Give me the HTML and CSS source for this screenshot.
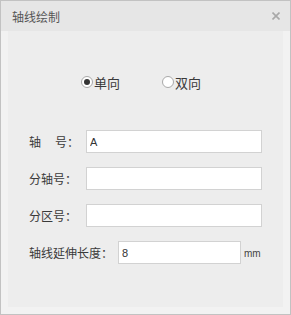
FILE: index.html
```html
<!DOCTYPE html>
<html lang="zh-CN">
<head>
  <meta charset="UTF-8" />
  <title>轴线绘制</title>
  <link rel="stylesheet" href="styles.css">
</head>
<body>
  <div class="dialog">
    <div class="dialog-header">
      <span class="dialog-title">轴线绘制</span>
      <span class="dialog-close">
        <svg width="8" height="8" viewBox="0 0 8 8"><path d="M0.5 0.5L7.5 7.5M7.5 0.5L0.5 7.5" stroke="#a8a8a8" stroke-width="1.6"/></svg>
      </span>
    </div>
    <div class="dialog-body">
      <div class="panel">
        <div class="radio-row">
          <label class="radio-item"><span class="radio checked"></span>单向</label>
          <label class="radio-item"><span class="radio"></span>双向</label>
        </div>

        <div class="form-row">
          <span class="field-label"><span class="spaced">轴</span>号：</span>
          <input type="text" class="field-input" value="A" />
        </div>
        <div class="form-row">
          <span class="field-label">分轴号：</span>
          <input type="text" class="field-input" value="" />
        </div>
        <div class="form-row">
          <span class="field-label">分区号：</span>
          <input type="text" class="field-input" value="" />
        </div>
        <div class="form-row">
          <span class="field-label wide">轴线延伸长度：</span>
          <input type="text" class="field-input short" value="8" />
          <span class="unit">mm</span>
        </div>
      </div>
    </div>
  </div>
</body>
</html>
```

FILE: styles.css
```css
body {
  margin: 0;
  padding: 0;
  font-family: "Noto Sans CJK SC", "Liberation Sans", sans-serif;
  background: #f2f2f2;
}
.dialog {
  width: 291px;
  height: 315px;
  box-sizing: border-box;
  border: 1px solid #c2c2c2;
  background: #f2f2f2;
  display: flex;
  flex-direction: column;
}
.dialog-header {
  height: 30px;
  background: #e6e6e6;
  display: flex;
  align-items: center;
  justify-content: space-between;
  padding: 0 10px 0 11px;
}
.dialog-title {
  font-size: 12px;
  color: #555;
}
.dialog-close {
  display: flex;
  margin-top: -1px;
}
.dialog-body {
  flex: 1;
  padding: 0 7px 7px 7px;
  display: flex;
}
.panel {
  flex: 1;
  background: #ededed;
  padding-left: 21px;
}
.radio-row {
  display: flex;
  margin: 41px 0 0 52px;
  height: 20px;
  align-items: center;
}
.radio-item {
  width: 81px;
  display: flex;
  align-items: center;
  font-size: 13px;
  color: #3a3a3a;
}
.radio {
  width: 10px;
  height: 10px;
  border: 1px solid #a9a9a9;
  border-radius: 50%;
  background: #fff;
  margin-right: 1px;
  position: relative;
}
.radio.checked::after {
  content: "";
  position: absolute;
  left: 2px;
  top: 2px;
  width: 6px;
  height: 6px;
  border-radius: 50%;
  background: #333;
}
.form-row {
  display: flex;
  align-items: center;
  height: 23px;
  margin-top: 14px;
}
.radio-row + .form-row {
  margin-top: 38px;
}
.field-label {
  width: 57px;
  font-size: 12px;
  color: #3a3a3a;
}
.field-label.wide {
  width: 89px;
}
.spaced {
  margin-right: 14px;
}
.field-input {
  width: 176px;
  height: 23px;
  box-sizing: border-box;
  border: 1px solid #d2d2d2;
  background: #fff;
  padding: 0 3px;
  font-family: "Liberation Sans", sans-serif;
  font-size: 11px;
  color: #333;
  outline: none;
}
.field-input.short {
  width: 123px;
}
.unit {
  font-family: "Liberation Sans", sans-serif;
  font-size: 10px;
  color: #444;
  margin-left: 3px;
  margin-top: 2px;
}
```
